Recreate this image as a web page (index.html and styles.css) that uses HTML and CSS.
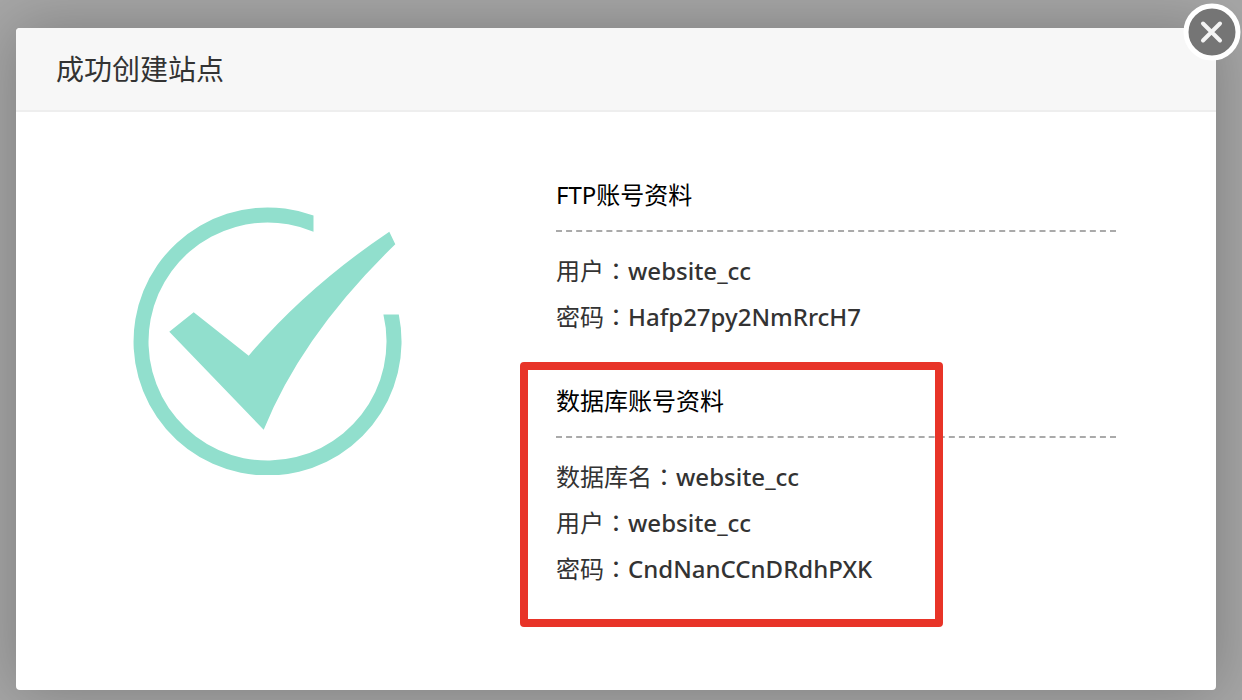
FILE: index.html
```html
<!DOCTYPE html>
<html lang="zh-CN">
<head>
<meta charset="utf-8">
<title>成功创建站点</title>
<link rel="stylesheet" href="styles.css">
</head>
<body>
<main class="overlay">
  <section class="modal" role="dialog" aria-labelledby="modal-title">
    <header class="modal-header">
      <h1 class="modal-title" id="modal-title">成功创建站点</h1>
    </header>
    <button class="close" type="button" aria-label="关闭">
      <svg class="close-icon" viewBox="0 0 58 58" aria-hidden="true">
        <circle cx="29" cy="29" r="26" fill="#757575" stroke="#fff" stroke-width="5"/>
        <path d="M20 20.500L37 37.500M37 20.500L20 37.500" stroke="#f4f4f4" stroke-width="4" stroke-linecap="round"/>
      </svg>
    </button>
    <div class="modal-body">
      <div class="status">
        <svg class="check" viewBox="0 0 269 268" aria-hidden="true">
          <path d="M180.500 8.600A134 134 0 1 0 265.800 107.500H250.400A119 119 0 1 1 180.500 24.800Z"/>
          <path d="M36.300 124.700L60.700 105.300L115.700 148.700Q174 80 256.300 24.700L262.300 37.300Q169.500 127 130.700 222.700Z"/>
        </svg>
      </div>
      <div class="details">
        <section class="account">
          <h2 class="account-title">FTP账号资料</h2>
          <dl class="fields">
            <div class="field"><dt>用户<span class="colon" lang="zh-TW">：</span></dt><dd>website_cc</dd></div>
            <div class="field"><dt>密码<span class="colon" lang="zh-TW">：</span></dt><dd>Hafp27py2NmRrcH7</dd></div>
          </dl>
        </section>
        <section class="account highlighted">
          <h2 class="account-title">数据库账号资料</h2>
          <dl class="fields">
            <div class="field"><dt>数据库名<span class="colon" lang="zh-TW">：</span></dt><dd>website_cc</dd></div>
            <div class="field"><dt>用户<span class="colon" lang="zh-TW">：</span></dt><dd>website_cc</dd></div>
            <div class="field"><dt>密码<span class="colon" lang="zh-TW">：</span></dt><dd>CndNanCCnDRdhPXK</dd></div>
          </dl>
        </section>
      </div>
    </div>
  </section>
</main>
</body>
</html>
```
FILE: styles.css
```css
*,
*::after {
  box-sizing: border-box;
}

body {
  margin: 0;
  background: #a6a6a6;
  color: #333;
  font-family: "Noto Sans", "Noto Sans CJK SC", sans-serif;
  font-size: 24px;
  line-height: 46px;
}

.overlay {
  min-height: 100vh;
  display: flex;
  padding: 28px 26px 10px 16px;
}

.modal {
  position: relative;
  flex: 1;
  background: #fff;
  border-radius: 4px;
  box-shadow: 0 0 60px rgba(0, 0, 0, 0.25);
}

.modal-header {
  padding: 18px 40px;
  background: #f7f7f7;
  border-bottom: 2px solid #eee;
  border-radius: 4px 4px 0 0;
}

.modal-title {
  margin: 0;
  font-size: 28px;
  font-weight: 400;
}

.close {
  position: absolute;
  top: -25px;
  right: -25px;
  width: 58px;
  height: 58px;
  padding: 0;
  border: 0;
  border-radius: 50%;
  background: none;
  cursor: pointer;
}

.close-icon {
  display: block;
}

.modal-body {
  display: grid;
  grid-template-columns: 270px 1fr;
  column-gap: 153px;
  padding: 60px 100px 60px 117px;
}

.status {
  padding-top: 35px;
}

.check {
  display: block;
  width: 269px;
  height: 268px;
  fill: #91dfcd;
}

.details {
  display: flex;
  flex-direction: column;
  gap: 38px;
}

.account {
  position: relative;
}

.account-title {
  margin: 0 0 16px;
  padding-bottom: 12px;
  border-bottom: 2px dashed #aaa;
  color: #000;
  font-size: 24px;
  font-weight: 400;
}

.fields,
.field dd {
  margin: 0;
}

.field {
  display: flex;
}

.field dd {
  font-weight: 500;
}

.colon {
  font-family: "Noto Sans CJK TC", sans-serif;
  line-height: 1;
}

.highlighted::after {
  content: "";
  position: absolute;
  top: -16px;
  bottom: -35px;
  left: -36px;
  width: 423px;
  border: 8px solid #e83428;
  border-radius: 4px;
  pointer-events: none;
}
```
